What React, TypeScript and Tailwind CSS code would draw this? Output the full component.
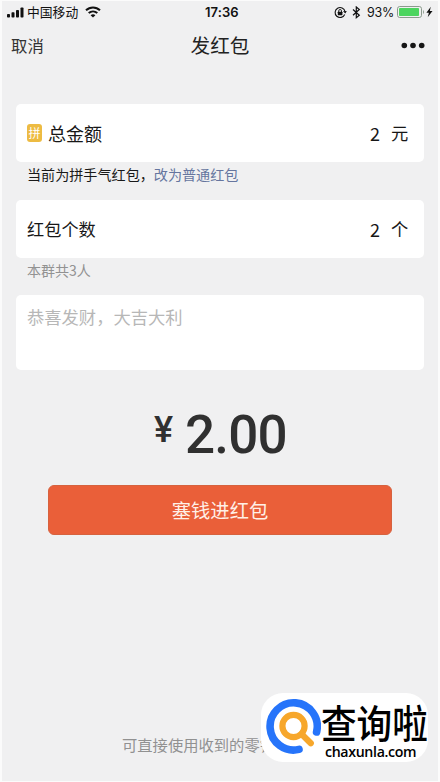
import React from "react";

function StatusBar() {
  return (
    <header className="flex h-[22px] items-center pl-[5px] pr-[2px] text-[#111]">
      <svg width="18" height="11" viewBox="0 0 18 11" fill="currentColor">
        <rect x="0" y="7" width="3" height="3.5" rx="0.8" />
        <rect x="4.5" y="5.2" width="3" height="5.3" rx="0.8" />
        <rect x="9" y="3" width="3" height="7.5" rx="0.8" />
        <rect x="13.5" y="0.5" width="3" height="10" rx="0.8" />
      </svg>
      <span className="ml-[2px] w-[53px] whitespace-nowrap text-[12.8px] leading-[20px]">中国移动</span>
      <svg className="ml-[5px]" width="16" height="12" viewBox="0 0 16 12" fill="none" stroke="currentColor" strokeWidth="2">
        <path d="M1 4.3C5 .4 11 .4 15 4.3" />
        <path d="M3.7 7.1c2.5-2.3 6.1-2.3 8.6 0" />
        <path d="M8 11.6 5.6 9.2c1.4-1.2 3.4-1.2 4.8 0Z" fill="currentColor" stroke="none" />
      </svg>
      <span className="ml-[104px] w-[36px] whitespace-nowrap font-[Inter] text-[13px] font-semibold leading-[22px] tracking-[0.1px]">17:36</span>
      <svg className="ml-[93px]" width="13" height="13" viewBox="0 0 13 13" fill="none" stroke="currentColor">
        <path d="M10.7 8.5A5 5 0 1 1 11 5.5" strokeWidth="1.1" />
        <path d="m9 5.2 3.8-.3-1.5 2.7Z" fill="currentColor" stroke="none" />
        <rect x="3.8" y="5.8" width="4.6" height="3.4" rx="0.4" fill="currentColor" stroke="none" />
        <path d="M4.7 6V4.9a1.4 1.4 0 0 1 2.8 0V6" strokeWidth="0.9" />
      </svg>
      <svg className="ml-[5px]" width="9" height="13" viewBox="0 0 9 13" fill="none" stroke="currentColor" strokeWidth="1.2">
        <path d="m1 3.5 6.3 5.7-3 2.5V1l3 2.5L1 9.2" />
      </svg>
      <span className="ml-[6px] w-[28px] whitespace-nowrap pt-px font-[Inter] text-[12.5px] leading-[21px] tracking-[-0.2px]">93%</span>
      <svg className="ml-[2px]" width="28" height="12" viewBox="0 0 28 12" fill="none">
        <rect x="0.5" y="0.5" width="24" height="11" rx="2.2" stroke="#8b9b8d" />
        <rect x="2" y="2" width="20" height="8" rx="0.8" fill="#4cd55f" />
        <path d="M26 4c1.3.7 1.3 3.3 0 4Z" fill="#8b9b8d" />
      </svg>
      <svg className="ml-[1px]" width="7" height="12" viewBox="0 0 7 12" fill="currentColor">
        <path d="M4.8.8.4 6.7h2.5L1.7 11.3l4.8-6.2H3.8Z" />
      </svg>
    </header>
  );
}

function FieldRow({ label, value, unit, badge }: { label: string; value: string; unit: string; badge?: string }) {
  return (
    <div className="flex h-[58px] items-center rounded-[5px] bg-white pl-[11px] pr-[16px] text-[#171717]">
      {badge && (
        <span className="mr-[6px] flex h-[18px] w-[15px] items-center justify-center rounded-[3px] bg-[#edbb42] text-[12px] leading-none text-white">
          {badge}
        </span>
      )}
      <span className={badge ? "text-[18px]" : "text-[17.2px]"}>{label}</span>
      <span className="ml-auto text-[18px]">{value}</span>
      <span className="ml-[11px] w-[17px] text-[17.3px]">{unit}</span>
    </div>
  );
}

function Watermark() {
  return (
    <aside className="absolute left-[261px] top-[693px] flex h-[69px] w-[167px] rounded-[22px] bg-white">
      <svg className="ml-[4px] mt-[4px] shrink-0" width="56" height="60" viewBox="265 697 56 60" fill="none">
        <path d="M316.6 732A23.6 23.6 0 1 0 299 749.4" stroke="#2674fa" strokeWidth="7.6" strokeLinecap="round" />
        <circle cx="293.5" cy="726" r="11.1" stroke="#f7a72b" strokeWidth="6.2" />
        <path d="m301.5 734 9.3 9.3" stroke="#f7a72b" strokeWidth="6.2" strokeLinecap="round" />
      </svg>
      <div className="flex flex-col text-black">
        <span className="mt-[10px] h-[38px] origin-top scale-y-[1.08] whitespace-nowrap text-[35.6px] font-medium leading-[34px]">查询啦</span>
        <span className="ml-[4px] mt-[3px] h-[16px] whitespace-nowrap font-['Open_Sans'] text-[14.2px] font-semibold leading-[16px] tracking-[-0.35px]">chaxunla.com</span>
      </div>
    </aside>
  );
}

export default function App() {
  return (
    <div className="h-[782px] w-[440px] overflow-hidden border-x-2 border-y border-[#fbfbfb] bg-[#f0f0f1] font-['Noto_Sans_CJK_SC',sans-serif]">
      <StatusBar />
      <nav className="grid h-[44px] grid-cols-3 items-center pl-[11px] pr-[11px] text-[#333]">
        <span className="-ml-[2px] text-[16.4px]">取消</span>
        <h1 className="text-center text-[19.6px] leading-none text-[#222]">发红包</h1>
        <svg className="mr-[2px] justify-self-end" width="24" height="7" viewBox="0 0 24 7" fill="#161616">
          <circle cx="3.3" cy="3.5" r="2.8" />
          <circle cx="12" cy="3.5" r="2.8" />
          <circle cx="20.7" cy="3.5" r="2.8" />
        </svg>
      </nav>
      <main className="px-[14px] pt-[37px]">
        <FieldRow badge="拼" label="总金额" value="2" unit="元" />
        <p className="h-[38px] whitespace-nowrap pl-[11px] text-[14.1px] leading-[24px] text-[#191919]">
          当前为拼手气红包，<span className="text-[#66769f]">改为普通红包</span>
        </p>
        <FieldRow label="红包个数" value="2" unit="个" />
        <p className="h-[37px] pl-[11px] text-[14px] leading-[24px] text-[#929292]">本群共3人</p>
        <div className="h-[75px] rounded-[5px] bg-white pl-[11px] pt-[9px] text-[17.3px] leading-[26px] text-[#b7b7b7]">恭喜发财，大吉大利</div>
        <div className="flex h-[115px] items-start pl-[138px] pt-[38px] font-[Roboto] font-medium text-[#303030]">
          <span className="mt-[4px] w-[31px] text-[36px] leading-[36px]">¥</span>
          <span className="text-[53px] leading-[55px] tracking-[-0.8px]">2.00</span>
        </div>
        <button className="mx-[32px] block h-[50px] w-[344px] rounded-[6px] border border-[#d6623f] bg-[#ea5f39] text-[19.3px] leading-[46px] text-[#fff0e7]">塞钱进红包</button>
      </main>
      <footer className="mt-[197px] whitespace-nowrap pl-[120px] text-[15.3px] leading-[24px] text-[#919191]">可直接使用收到的零钱</footer>
      <Watermark />
    </div>
  );
}
